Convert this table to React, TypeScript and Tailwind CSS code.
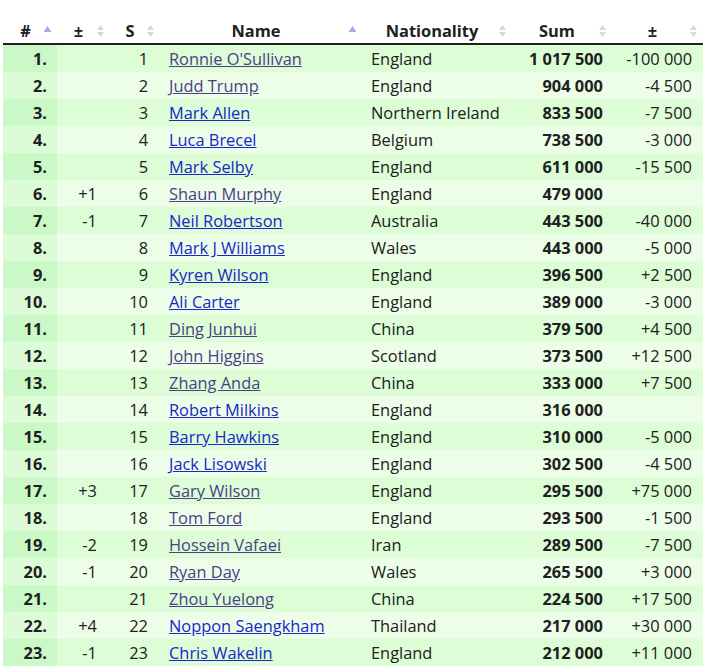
import React from "react";

type Row = {
  move: string;
  seed: number;
  name: string;
  visited?: boolean;
  nation: string;
  sum: string;
  diff: string;
};

const ROWS: Row[] = [
  { move: "", seed: 1, name: "Ronnie O'Sullivan", visited: true, nation: "England", sum: "1 017 500", diff: "-100 000" },
  { move: "", seed: 2, name: "Judd Trump", visited: true, nation: "England", sum: "904 000", diff: "-4 500" },
  { move: "", seed: 3, name: "Mark Allen", nation: "Northern Ireland", sum: "833 500", diff: "-7 500" },
  { move: "", seed: 4, name: "Luca Brecel", nation: "Belgium", sum: "738 500", diff: "-3 000" },
  { move: "", seed: 5, name: "Mark Selby", nation: "England", sum: "611 000", diff: "-15 500" },
  { move: "+1", seed: 6, name: "Shaun Murphy", visited: true, nation: "England", sum: "479 000", diff: "" },
  { move: "-1", seed: 7, name: "Neil Robertson", nation: "Australia", sum: "443 500", diff: "-40 000" },
  { move: "", seed: 8, name: "Mark J Williams", nation: "Wales", sum: "443 000", diff: "-5 000" },
  { move: "", seed: 9, name: "Kyren Wilson", nation: "England", sum: "396 500", diff: "+2 500" },
  { move: "", seed: 10, name: "Ali Carter", nation: "England", sum: "389 000", diff: "-3 000" },
  { move: "", seed: 11, name: "Ding Junhui", visited: true, nation: "China", sum: "379 500", diff: "+4 500" },
  { move: "", seed: 12, name: "John Higgins", visited: true, nation: "Scotland", sum: "373 500", diff: "+12 500" },
  { move: "", seed: 13, name: "Zhang Anda", visited: true, nation: "China", sum: "333 000", diff: "+7 500" },
  { move: "", seed: 14, name: "Robert Milkins", nation: "England", sum: "316 000", diff: "" },
  { move: "", seed: 15, name: "Barry Hawkins", nation: "England", sum: "310 000", diff: "-5 000" },
  { move: "", seed: 16, name: "Jack Lisowski", nation: "England", sum: "302 500", diff: "-4 500" },
  { move: "+3", seed: 17, name: "Gary Wilson", visited: true, nation: "England", sum: "295 500", diff: "+75 000" },
  { move: "", seed: 18, name: "Tom Ford", visited: true, nation: "England", sum: "293 500", diff: "-1 500" },
  { move: "-2", seed: 19, name: "Hossein Vafaei", visited: true, nation: "Iran", sum: "289 500", diff: "-7 500" },
  { move: "-1", seed: 20, name: "Ryan Day", visited: true, nation: "Wales", sum: "265 500", diff: "+3 000" },
  { move: "", seed: 21, name: "Zhou Yuelong", visited: true, nation: "China", sum: "224 500", diff: "+17 500" },
  { move: "+4", seed: 22, name: "Noppon Saengkham", nation: "Thailand", sum: "217 000", diff: "+30 000" },
  { move: "-1", seed: 23, name: "Chris Wakelin", nation: "England", sum: "212 000", diff: "+11 000" },
];

function SortIcon({ dir }: { dir: "up" | "both" }) {
  if (dir === "up") {
    return (
      <svg width="9" height="12" viewBox="0 0 9 12" className="absolute right-[5px] top-[6px]">
        <path d="M4.5 2 L8.5 8 L0.5 8 Z" fill="#a8a8e4" />
      </svg>
    );
  }
  return (
    <svg width="9" height="14" viewBox="0 0 9 14" className="absolute right-[5px] top-[6px]">
      <path d="M4.5 1 L8 6 L1 6 Z" fill="#d8d8d8" />
      <path d="M4.5 13 L8 8 L1 8 Z" fill="#d8d8d8" />
    </svg>
  );
}

function Th({ label, dir, pr }: { label: string; dir: "up" | "both"; pr: string }) {
  return (
    <th className={`relative h-[26px] border-b-2 border-[#202020] p-0 text-center font-bold ${pr}`}>
      {label}
      <SortIcon dir={dir} />
    </th>
  );
}

export default function App() {
  return (
    <div className="bg-white pt-[18px] pl-[3px] text-[16.4px] text-[#202020]" style={{ fontFamily: "'Open Sans', 'Noto Sans', sans-serif" }}>
      <table className="w-[700px] table-fixed border-collapse leading-[27px]">
        <colgroup>
          <col className="w-[54px]" />
          <col className="w-[53px]" />
          <col className="w-[50px]" />
          <col className="w-[202px]" />
          <col className="w-[150px]" />
          <col className="w-[100px]" />
          <col className="w-[91px]" />
        </colgroup>
        <thead>
          <tr className="leading-[24px]">
            <Th label="#" dir="up" pr="pr-[9px]" />
            <Th label="±" dir="both" pr="pr-[10px]" />
            <Th label="S" dir="both" pr="pr-[10px]" />
            <Th label="Name" dir="up" pr="pr-[10px]" />
            <Th label="Nationality" dir="both" pr="pr-[10px]" />
            <Th label="Sum" dir="both" pr="pr-[10px]" />
            <Th label="±" dir="both" pr="pr-[10px]" />
          </tr>
        </thead>
        <tbody>
          {ROWS.map((r, i) => {
            const odd = i % 2 === 0;
            const rest = odd ? "bg-[#dcfdd6]" : "bg-[#ecfee8]";
            return (
              <tr key={r.seed} className="h-[27px]">
                <td className={`p-0 pr-[10px] text-right font-bold ${odd ? "bg-[#caf8c6]" : "bg-[#dcfbd7]"}`}>{r.seed}.</td>
                <td className={`p-0 pr-[13px] text-right ${rest}`}>{r.move}</td>
                <td className={`p-0 pr-[12px] text-right ${rest}`}>{r.seed}</td>
                <td className={`truncate p-0 pl-[9px] ${rest}`}>
                  <a href="#" className={`underline ${r.visited ? "text-[#4b3f88]" : "text-[#1a26c8]"}`}>
                    {r.name}
                  </a>
                </td>
                <td className={`p-0 pl-[9px] ${rest}`}>{r.nation}</td>
                <td className={`p-0 pr-[9px] text-right font-bold ${rest}`}>{r.sum}</td>
                <td className={`p-0 pr-[11px] text-right ${rest}`}>{r.diff}</td>
              </tr>
            );
          })}
        </tbody>
      </table>
    </div>
  );
}
